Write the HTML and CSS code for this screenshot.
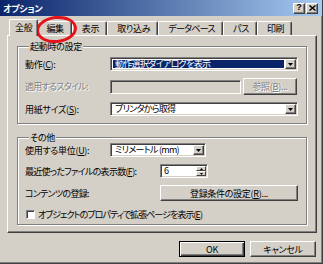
FILE: index.html
```html
<!DOCTYPE html>
<html lang="ja">
<head>
<meta charset="utf-8">
<title>オプション</title>
<link rel="stylesheet" href="styles.css">
</head>
<body>
<div class="window">
  <div class="titlebar">
    <span class="title">オプション</span>
    <div class="tbtns">
      <span class="tbtn">?</span>
      <span class="tbtn"><svg width="7" height="6" viewBox="0 0 7 6"><path d="M0.5 0.5L6.5 5.5M6.5 0.5L0.5 5.5" stroke="#000" stroke-width="1.4"/></svg></span>
    </div>
  </div>

  <div class="tabs">
    <div class="tab active">全般</div>
    <div class="tab">編集</div>
    <div class="tab">表示</div>
    <div class="tab">取り込み</div>
    <div class="tab tight">データベース</div>
    <div class="tab">パス</div>
    <div class="tab">印刷</div>
  </div>

  <div class="panel">
    <fieldset class="group g1">
      <legend>起動時の設定</legend>
      <div class="row r14">
        <span class="lbl">動作(<u>C</u>):</span>
        <div class="combo grow sel">
          <span class="val tight">動作選択ダイアログを表示</span>
          <span class="ddbtn"><svg width="5" height="3" viewBox="0 0 5 3"><path d="M0 0H5L2.5 3Z" fill="#000"/></svg></span>
        </div>
      </div>
      <div class="row r17">
        <span class="lbl disabled tight">適用するスタイル:</span>
        <div class="field disabled-field"></div>
        <span class="btn ref disabled">参照(<u>B</u>)...</span>
      </div>
      <div class="row r14">
        <span class="lbl">用紙サイズ(<u>S</u>):</span>
        <div class="combo grow">
          <span class="val tight">プリンタから取得</span>
          <span class="ddbtn"><svg width="5" height="3" viewBox="0 0 5 3"><path d="M0 0H5L2.5 3Z" fill="#000"/></svg></span>
        </div>
      </div>
    </fieldset>

    <fieldset class="group g2">
      <legend>その他</legend>
      <div class="row r14">
        <span class="lbl">使用する単位(<u>U</u>):</span>
        <div class="combo unit">
          <span class="val tight">ミリメートル (mm)</span>
          <span class="ddbtn"><svg width="5" height="3" viewBox="0 0 5 3"><path d="M0 0H5L2.5 3Z" fill="#000"/></svg></span>
        </div>
      </div>
      <div class="row r14">
        <span class="lbl wide tight">最近使ったファイルの表示数(<u>F</u>):</span>
        <div class="combo spin">
          <span class="val">6</span>
          <span class="spinbtns">
            <span class="sb"><svg width="3" height="2" viewBox="0 0 3 2"><path d="M0 2H3L1.5 0Z" fill="#000"/></svg></span>
            <span class="sb"><svg width="3" height="2" viewBox="0 0 3 2"><path d="M0 0H3L1.5 2Z" fill="#000"/></svg></span>
          </span>
        </div>
      </div>
      <div class="row r16">
        <span class="lbl wide tight">コンテンツの登録:</span>
        <span class="btn grow">登録条件の設定(<u>R</u>)...</span>
      </div>
      <div class="row r12">
        <span class="check"></span>
        <span class="checklbl tighter">オブジェクトのプロパティで拡張ページを表示(<u>E</u>)</span>
      </div>
    </fieldset>
  </div>

  <div class="footer">
    <span class="btn dlg default">OK</span>
    <span class="btn dlg tight">キャンセル</span>
  </div>

  <div class="annot"></div>
</div>
</body>
</html>
```

FILE: styles.css
```css
* { box-sizing: border-box; }

body {
  margin: 0;
  font-family: "Noto Sans CJK JP", "Noto Sans", sans-serif;
  font-size: 9px;
  line-height: 11px;
  font-feature-settings: "palt";
  color: #000;
  background: #d4d0c8;
}

u { text-decoration: underline; text-underline-offset: 1px; }

.window {
  position: relative;
  width: 323px;
  height: 264px;
  background: #d4d0c8;
  border-right: 1px solid #404040;
  border-bottom: 1px solid #404040;
  box-shadow: inset -1px -1px #808080;
  display: flex;
  flex-direction: column;
  overflow: hidden;
}

/* title bar */
.titlebar {
  height: 16px;
  flex: none;
  background: linear-gradient(to right, #0a246a, #a6caf0);
  display: flex;
  align-items: center;
  justify-content: space-between;
  padding: 0 4px 0 3px;
}
.title { color: #fff; font-weight: bold; letter-spacing: -0.3px; }
.tbtns { display: flex; gap: 1px; }
.tbtn {
  width: 12px;
  height: 11px;
  background: #d4d0c8;
  border-top: 1px solid #fff;
  border-left: 1px solid #fff;
  border-right: 1px solid #404040;
  border-bottom: 1px solid #404040;
  box-shadow: inset -1px -1px #808080;
  display: flex;
  align-items: center;
  justify-content: center;
  font: bold 9px/9px "Liberation Sans", sans-serif;
  padding-bottom: 1px;
}

/* tabs */
.tabs {
  display: flex;
  align-items: flex-end;
  height: 16px;
  margin: 3px 0 0 11px;
  flex: none;
}
.tab {
  height: 14px;
  padding: 0 7px 0 9px;
  background: #d4d0c8;
  border-top: 1px solid #fff;
  border-left: 1px solid #fff;
  border-right: 1px solid #404040;
  box-shadow: inset -1px 0 #808080;
  border-radius: 2px 2px 0 0;
  display: flex;
  align-items: center;
  white-space: nowrap;
  letter-spacing: -0.3px;
}
.tab.active {
  position: relative;
  z-index: 2;
  height: 17px;
  margin: 0 -2px -1px -2px;
  padding: 0 5px 2px;
}

/* panel */
.panel {
  height: 198px;
  margin-left: 7px;
  width: 310px;
  flex: none;
  border-top: 1px solid #fff;
  border-left: 1px solid #fff;
  border-right: 1px solid #404040;
  border-bottom: 1px solid #404040;
  box-shadow: inset -1px -1px #808080;
  padding: 5px 9px 0 9px;
  display: flex;
  flex-direction: column;
}

.group {
  margin: 0;
  min-width: 0;
  border: 1px solid #808080;
  box-shadow: inset 1px 1px #fff, 1px 1px #fff;
  padding: 5px 8px 7px 7px;
  display: flex;
  flex-direction: column;
  gap: 7px;
}
.group legend {
  padding: 0 1px;
  margin-left: 4px;
  background: #d4d0c8;
  letter-spacing: -0.3px;
}
.g2 { margin-top: 8px; padding-top: 0; padding-bottom: 4px; }

.row { display: flex; align-items: center; }
.r12 { height: 12px; }
.r14 { height: 14px; }
.r16 { height: 16px; }
.r17 { height: 17px; }

.lbl { width: 85px; flex: none; white-space: nowrap; letter-spacing: -0.3px; }
.lbl.wide { width: 135px; }
.disabled { color: #808080; text-shadow: 1px 1px #fff; }

.tight { letter-spacing: -0.7px; }
.tighter { letter-spacing: -0.95px; }

.grow { flex: 1; }

/* sunken boxes */
.combo, .field {
  height: 14px;
  display: flex;
  background: #fff;
  border: 1px solid;
  border-color: #808080 #fff #fff #808080;
  box-shadow: inset 1px 1px #404040, inset -1px -1px #d4d0c8;
  padding: 1px;
}
.combo .val {
  flex: 1;
  display: flex;
  align-items: center;
  padding-left: 2px;
  margin: 1px;
  line-height: 8px;
  white-space: nowrap;
}
.combo.sel .val { background: #0a246a; color: #fff; }
.ddbtn {
  width: 11px;
  flex: none;
  background: #d4d0c8;
  border-top: 1px solid #fff;
  border-left: 1px solid #fff;
  border-right: 1px solid #404040;
  border-bottom: 1px solid #404040;
  box-shadow: inset -1px -1px #808080;
  display: flex;
  align-items: center;
  justify-content: center;
}
.combo.unit { width: 96px; flex: none; }
.combo.spin { width: 48px; flex: none; }
.combo.spin .val { padding-left: 1px; }
.spinbtns { width: 10px; display: flex; flex-direction: column; flex: none; }
.sb {
  flex: 1;
  background: #d4d0c8;
  border-top: 1px solid #fff;
  border-left: 1px solid #fff;
  border-right: 1px solid #404040;
  border-bottom: 1px solid #404040;
  display: flex;
  align-items: center;
  justify-content: center;
}

.field.disabled-field {
  width: 131px;
  flex: none;
  background: #d4d0c8;
  margin-right: 2px;
}

/* buttons */
.btn {
  height: 100%;
  display: flex;
  align-items: center;
  justify-content: center;
  background: #d4d0c8;
  border: 1px solid;
  border-color: #fff #404040 #404040 #fff;
  box-shadow: inset -1px -1px #808080;
  white-space: nowrap;
  letter-spacing: -0.3px;
}
.btn.ref { width: 54px; flex: none; }

/* checkbox */
.check {
  width: 9px;
  height: 9px;
  margin-left: 1px;
  background: #fff;
  border: 1px solid;
  border-color: #808080 #fff #fff #808080;
  box-shadow: inset 1px 1px #404040;
  flex: none;
}
.checklbl { margin-left: 3px; white-space: nowrap; }

/* footer */
.footer {
  display: flex;
  justify-content: flex-end;
  gap: 5px;
  margin-top: 8px;
  padding-right: 6px;
}
.btn.dlg { width: 66px; height: 16px; flex: none; }
.btn.default {
  border-color: #000;
  box-shadow: inset 1px 1px #fff, inset -1px -1px #404040, inset -2px -2px #808080;
}

/* red annotation circle drawn over the tab strip */
.annot {
  position: absolute;
  left: 36px;
  top: 16px;
  width: 41px;
  height: 27px;
  border: 3px solid #e3141b;
  border-radius: 50%;
  transform: rotate(-6deg);
  pointer-events: none;
}
```
